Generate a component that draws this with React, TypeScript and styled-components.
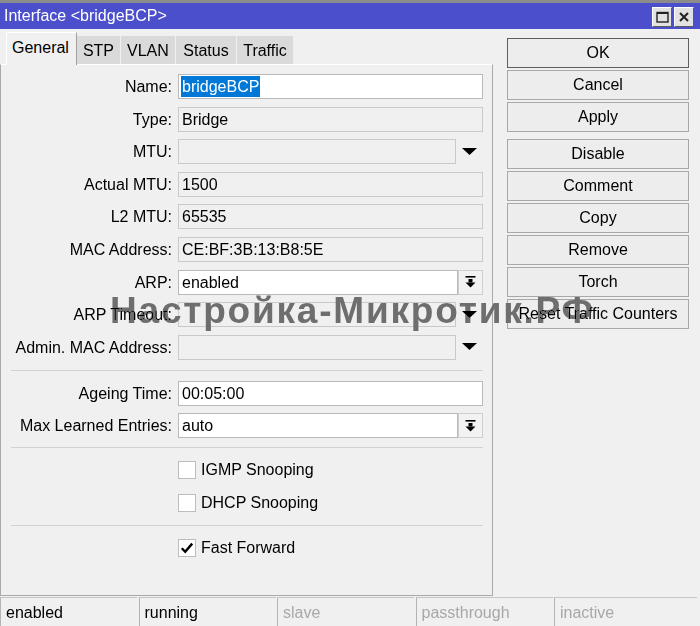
import React from "react";
import styled, { createGlobalStyle } from "styled-components";

const Global = createGlobalStyle`
  html, body { margin: 0; padding: 0; background: #f0f0f0; }
  body { font-family: "Liberation Sans", Arial, sans-serif; font-size: 16px; color: #000; }
  * { box-sizing: border-box; }
`;

const Window = styled.div`
  position: relative;
  width: 700px;
  height: 626px;
  overflow: hidden;
  background: #f0f0f0;
  display: flex;
  flex-direction: column;
  border-top: 3px solid #8c8c8c;
`;

const TitleBar = styled.div`
  height: 26px;
  flex: none;
  background: #4c4fcc;
  color: #fff;
  display: flex;
  align-items: center;
  justify-content: space-between;
  padding: 0 6px 0 4px;
  font-size: 16px;
`;

const TitleButtons = styled.div`
  display: flex;
  gap: 2px;
  margin-top: 2px;
`;

const TitleButton = styled.div`
  width: 20px;
  height: 20px;
  background: #e2e2e2;
  border: 1px solid;
  border-color: #ffffff #5c5c5c #5c5c5c #ffffff;
  display: flex;
  align-items: center;
  justify-content: center;
`;

const Body = styled.div`
  flex: 1;
  display: flex;
  min-height: 0;
`;

const LeftCol = styled.div`
  width: 493px;
  display: flex;
  flex-direction: column;
  padding-top: 3px;
`;

const TabBar = styled.div`
  height: 32px;
  flex: none;
  display: flex;
  align-items: flex-end;
  gap: 1px;
  padding-left: 6px;
`;

const Tab = styled.div<{ $active?: boolean; $extra?: number }>`
  height: ${(p) => (p.$active ? 33 : 28)}px;
  margin-bottom: ${(p) => (p.$active ? -1 : 0)}px;
  margin-right: ${(p) => (p.$active ? -1 : 0)}px;
  position: relative;
  z-index: ${(p) => (p.$active ? 1 : 0)};
  padding: ${(p) =>
    p.$active ? "0 7px 2px 5px" : `1px ${6 + (p.$extra ?? 0)}px 0 ${6 + (p.$extra ?? 0)}px`};
  background: ${(p) => (p.$active ? "#f0f0f0" : "#dadada")};
  border-left: ${(p) => (p.$active ? "1px solid #ffffff" : "none")};
  border-top: 1px solid ${(p) => (p.$active ? "#ffffff" : "#dadada")};
  border-right: ${(p) => (p.$active ? "1px solid #a0a0a0" : "none")};
  display: flex;
  align-items: center;
  font-size: 16px;
`;

const Panel = styled.div`
  flex: 1;
  margin-bottom: 1px;
  border: 1px solid #a9a9a9;
  border-top-color: #ffffff;
  padding-top: 9px;
  display: flex;
  flex-direction: column;
`;

const Section = styled.div<{ $gap: number }>`
  display: flex;
  flex-direction: column;
  gap: ${(p) => p.$gap}px;
`;

const Row = styled.div`
  display: grid;
  grid-template-columns: 171px 305px;
  column-gap: 6px;
  height: 25px;
`;

const Label = styled.div`
  text-align: right;
  line-height: 25px;
  white-space: nowrap;
`;

const Field = styled.div<{ $editable?: boolean; $w?: number }>`
  width: ${(p) => (p.$w ? `${p.$w}px` : "100%")};
  height: 25px;
  border: 1px solid ${(p) => (p.$editable ? "#b9b9b9" : "#c9c9c9")};
  background: ${(p) => (p.$editable ? "#ffffff" : "#f0f0f0")};
  padding-left: 3px;
  line-height: 23px;
  white-space: nowrap;
  overflow: hidden;
`;

const Selected = styled.span`
  display: inline-block;
  margin-left: -1px;
  padding: 0 1px;
  line-height: 21px;
  background: #0078d7;
  color: #fff;
`;

const FieldLine = styled.div`
  display: flex;
  align-items: center;
`;

const ArrowZone = styled.div`
  flex: 1;
  height: 25px;
  display: flex;
  align-items: center;
  justify-content: center;
`;

const ComboButton = styled.div`
  width: 25px;
  height: 25px;
  border: 1px solid #cfcfcf;
  background: #f2f2f2;
  display: flex;
  align-items: center;
  justify-content: center;
`;

const Separator = styled.div<{ $top: number; $bottom: number }>`
  height: 1px;
  background: #d2d2d2;
  margin: ${(p) => p.$top}px 0 ${(p) => p.$bottom}px 10px;
  width: 472px;
`;

const CheckRow = styled.div`
  height: 25px;
  display: flex;
  align-items: center;
  padding-left: 177px;
  gap: 5px;
`;

const CheckBox = styled.div`
  width: 18px;
  height: 18px;
  border: 1px solid #bdbdbd;
  background: #fff;
  display: flex;
  align-items: center;
  justify-content: center;
`;

const ButtonCol = styled.div`
  margin-left: 14px;
  padding-top: 9px;
  width: 182px;
  display: flex;
  flex-direction: column;
  gap: 2px;
`;

const Button = styled.div<{ $default?: boolean; $gapTop?: number }>`
  height: 30px;
  margin-top: ${(p) => p.$gapTop ?? 0}px;
  border: 1px solid ${(p) => (p.$default ? "#5e5e5e" : "#a8a8a8")};
  background: #ededed;
  display: flex;
  align-items: center;
  justify-content: center;
  font-size: 16px;
  white-space: nowrap;
`;

const StatusBar = styled.div`
  height: 29px;
  flex: none;
  display: flex;
  gap: 1.5px;
  padding-right: 3px;
`;

const StatusCell = styled.div<{ $dim?: boolean }>`
  width: 137px;
  flex: none;
  border-top: 1px solid #c6c6c6;
  border-left: 1px solid #b4b4b4;
  padding-left: 5px;
  padding-top: 1px;
  line-height: 27px;
  color: ${(p) => (p.$dim ? "#a8a8a8" : "#000")};
  &:last-child { flex: 1; }
`;

const Watermark = styled.div`
  position: absolute;
  left: 110px;
  top: 289px;
  font-size: 37px;
  line-height: 37px;
  font-weight: bold;
  letter-spacing: 1.8px;
  color: #6e6e6e;
  mix-blend-mode: darken;
  pointer-events: none;
  white-space: nowrap;
`;

const DownTriangle = () => (
  <svg width="15" height="8" viewBox="0 0 15 8">
    <polygon points="0,0 15,0 7.5,7" fill="#000" />
  </svg>
);

const ComboIcon = () => (
  <svg width="11" height="12" viewBox="0 0 11 12">
    <rect x="0.5" y="0" width="10" height="1.6" fill="#000" />
    <rect x="3.5" y="3" width="4" height="3.5" fill="#000" />
    <polygon points="0.5,6.5 10.5,6.5 5.5,11.5" fill="#000" />
  </svg>
);

const CheckMark = () => (
  <svg width="14" height="14" viewBox="0 0 14 14">
    <path d="M1.8 7.2 L5.2 10.8 L12.2 2.6" fill="none" stroke="#000" strokeWidth="2.4" />
  </svg>
);

type RowDef = {
  label: string;
  value?: string;
  kind: "edit" | "ro" | "drop" | "combo" | "name";
};

const rows1: RowDef[] = [
  { label: "Name:", value: "bridgeBCP", kind: "name" },
  { label: "Type:", value: "Bridge", kind: "ro" },
  { label: "MTU:", value: "", kind: "drop" },
  { label: "Actual MTU:", value: "1500", kind: "ro" },
  { label: "L2 MTU:", value: "65535", kind: "ro" },
  { label: "MAC Address:", value: "CE:BF:3B:13:B8:5E", kind: "ro" },
  { label: "ARP:", value: "enabled", kind: "combo" },
  { label: "ARP Timeout:", value: "", kind: "drop" },
  { label: "Admin. MAC Address:", value: "", kind: "drop" },
];

const rows2: RowDef[] = [
  { label: "Ageing Time:", value: "00:05:00", kind: "edit" },
  { label: "Max Learned Entries:", value: "auto", kind: "combo" },
];

const FormRow = ({ r }: { r: RowDef }) => {
  let content: React.ReactNode;
  if (r.kind === "name") {
    content = (
      <Field $editable>
        <Selected>{r.value}</Selected>
      </Field>
    );
  } else if (r.kind === "drop") {
    content = (
      <FieldLine>
        <Field $w={278}>{r.value}</Field>
        <ArrowZone>
          <DownTriangle />
        </ArrowZone>
      </FieldLine>
    );
  } else if (r.kind === "combo") {
    content = (
      <FieldLine>
        <Field $editable $w={280}>
          {r.value}
        </Field>
        <ComboButton>
          <ComboIcon />
        </ComboButton>
      </FieldLine>
    );
  } else {
    content = <Field $editable={r.kind === "edit"}>{r.value}</Field>;
  }
  return (
    <Row>
      <Label>{r.label}</Label>
      {content}
    </Row>
  );
};

const buttons: { text: string; def?: boolean; gap?: number }[] = [
  { text: "OK", def: true },
  { text: "Cancel" },
  { text: "Apply" },
  { text: "Disable", gap: 5 },
  { text: "Comment" },
  { text: "Copy" },
  { text: "Remove" },
  { text: "Torch" },
  { text: "Reset Traffic Counters" },
];

const status: { text: string; dim?: boolean }[] = [
  { text: "enabled" },
  { text: "running" },
  { text: "slave", dim: true },
  { text: "passthrough", dim: true },
  { text: "inactive", dim: true },
];

const tabs: { text: string; extra?: number }[] = [
  { text: "STP" },
  { text: "VLAN" },
  { text: "Status", extra: 1.5 },
  { text: "Traffic" },
];

export default function App() {
  return (
    <>
      <Global />
      <Window>
        <TitleBar>
          <span>Interface &lt;bridgeBCP&gt;</span>
          <TitleButtons>
            <TitleButton>
              <svg width="13" height="12" viewBox="0 0 13 12">
                <rect x="1" y="1.5" width="11" height="9.5" fill="none" stroke="#222" strokeWidth="1.4" />
                <rect x="1" y="1" width="11" height="2" fill="#222" />
              </svg>
            </TitleButton>
            <TitleButton>
              <svg width="12" height="12" viewBox="0 0 12 12">
                <path d="M2 2 L10 10 M10 2 L2 10" stroke="#222" strokeWidth="2" />
              </svg>
            </TitleButton>
          </TitleButtons>
        </TitleBar>
        <Body>
          <LeftCol>
            <TabBar>
              <Tab $active>General</Tab>
              {tabs.map((t) => (
                <Tab key={t.text} $extra={t.extra}>
                  {t.text}
                </Tab>
              ))}
            </TabBar>
            <Panel>
              <Section $gap={7.6}>
                {rows1.map((r) => (
                  <FormRow key={r.label} r={r} />
                ))}
              </Section>
              <Separator $top={10} $bottom={10} />
              <Section $gap={7.6}>
                {rows2.map((r) => (
                  <FormRow key={r.label} r={r} />
                ))}
              </Section>
              <Separator $top={8.6} $bottom={10} />
              <Section $gap={8}>
                <CheckRow>
                  <CheckBox />
                  <span>IGMP Snooping</span>
                </CheckRow>
                <CheckRow>
                  <CheckBox />
                  <span>DHCP Snooping</span>
                </CheckRow>
              </Section>
              <Separator $top={9} $bottom={10} />
              <CheckRow>
                <CheckBox>
                  <CheckMark />
                </CheckBox>
                <span>Fast Forward</span>
              </CheckRow>
            </Panel>
          </LeftCol>
          <ButtonCol>
            {buttons.map((b) => (
              <Button key={b.text} $default={b.def} $gapTop={b.gap}>
                {b.text}
              </Button>
            ))}
          </ButtonCol>
        </Body>
        <StatusBar>
          {status.map((s) => (
            <StatusCell key={s.text} $dim={s.dim}>
              {s.text}
            </StatusCell>
          ))}
        </StatusBar>
        <Watermark>Настройка-Микротик.РФ</Watermark>
      </Window>
    </>
  );
}
